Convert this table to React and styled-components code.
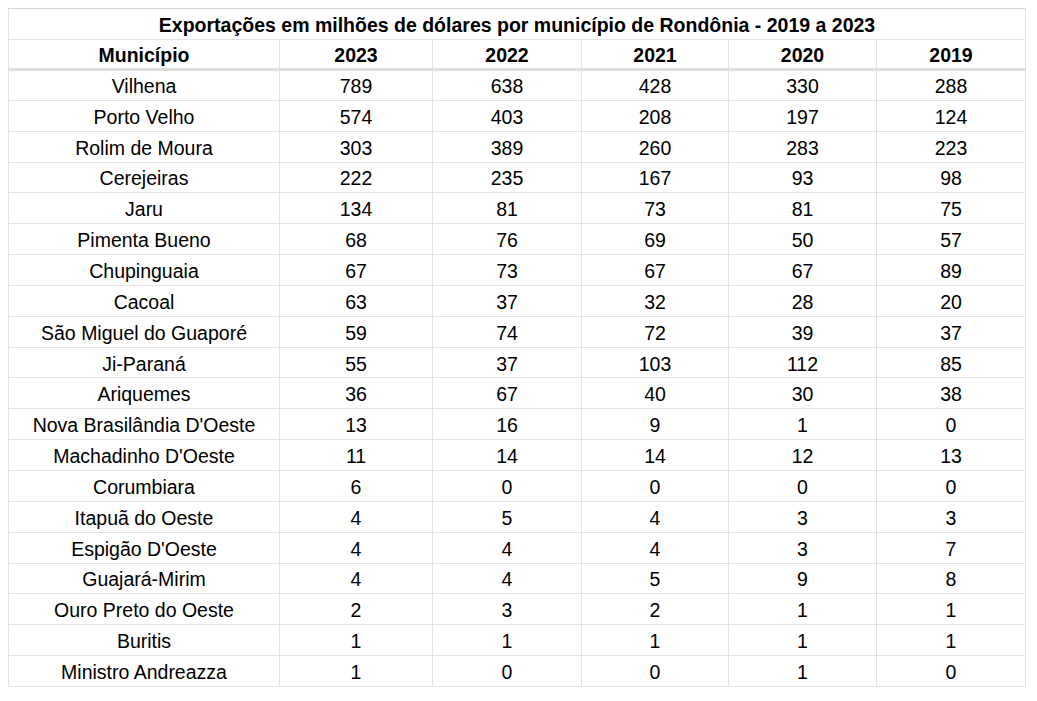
import React from 'react';
import styled, { createGlobalStyle } from 'styled-components';

const GlobalStyle = createGlobalStyle`
  html, body {
    margin: 0;
    background: #ffffff;
  }
  body {
    padding: 8px;
    font-family: "Liberation Sans", Arial, sans-serif;
    color: #000;
  }
`;

const Sheet = styled.table`
  border-collapse: collapse;
  table-layout: fixed;
  width: 1017px;
  font-size: 19.5px;
  border: 1px solid #d4d4d4;
`;

const TitleCell = styled.th`
  height: 28px;
  padding: 2px 0 0;
  font-weight: 700;
  text-align: center;
  border: 1px solid #e2e2e2;
  border-top-color: #d4d4d4;
`;

const HeadCell = styled.th`
  height: 26px;
  padding: 2px 0 0;
  font-weight: 700;
  text-align: center;
  border: 1px solid #e2e2e2;
  border-bottom: 3px solid #dedede;
`;

const Row = styled.tr`
  height: 30.85px;
`;

const Cell = styled.td`
  padding: 3px 0 0;
  text-align: center;
  vertical-align: middle;
  white-space: nowrap;
  border: 1px solid #e2e2e2;
`;

const widths = [271, 153, 149, 147, 148, 149];
const years = ['2023', '2022', '2021', '2020', '2019'];

const data = [
  ['Vilhena', 789, 638, 428, 330, 288],
  ['Porto Velho', 574, 403, 208, 197, 124],
  ['Rolim de Moura', 303, 389, 260, 283, 223],
  ['Cerejeiras', 222, 235, 167, 93, 98],
  ['Jaru', 134, 81, 73, 81, 75],
  ['Pimenta Bueno', 68, 76, 69, 50, 57],
  ['Chupinguaia', 67, 73, 67, 67, 89],
  ['Cacoal', 63, 37, 32, 28, 20],
  ['São Miguel do Guaporé', 59, 74, 72, 39, 37],
  ['Ji-Paraná', 55, 37, 103, 112, 85],
  ['Ariquemes', 36, 67, 40, 30, 38],
  ['Nova Brasilândia D\'Oeste', 13, 16, 9, 1, 0],
  ['Machadinho D\'Oeste', 11, 14, 14, 12, 13],
  ['Corumbiara', 6, 0, 0, 0, 0],
  ['Itapuã do Oeste', 4, 5, 4, 3, 3],
  ['Espigão D\'Oeste', 4, 4, 4, 3, 7],
  ['Guajará-Mirim', 4, 4, 5, 9, 8],
  ['Ouro Preto do Oeste', 2, 3, 2, 1, 1],
  ['Buritis', 1, 1, 1, 1, 1],
  ['Ministro Andreazza', 1, 0, 0, 1, 0],
];

export default function App() {
  return (
    <>
      <GlobalStyle />
      <Sheet>
        <colgroup>
          {widths.map((w, i) => (
            <col key={i} style={{ width: w }} />
          ))}
        </colgroup>
        <thead>
          <tr>
            <TitleCell colSpan={6}>
              Exportações em milhões de dólares por município de Rondônia - 2019 a 2023
            </TitleCell>
          </tr>
          <tr>
            <HeadCell>Município</HeadCell>
            {years.map((y) => (
              <HeadCell key={y}>{y}</HeadCell>
            ))}
          </tr>
        </thead>
        <tbody>
          {data.map((r) => (
            <Row key={r[0]}>
              {r.map((v, i) => (
                <Cell key={i}>{v}</Cell>
              ))}
            </Row>
          ))}
        </tbody>
      </Sheet>
    </>
  );
}
